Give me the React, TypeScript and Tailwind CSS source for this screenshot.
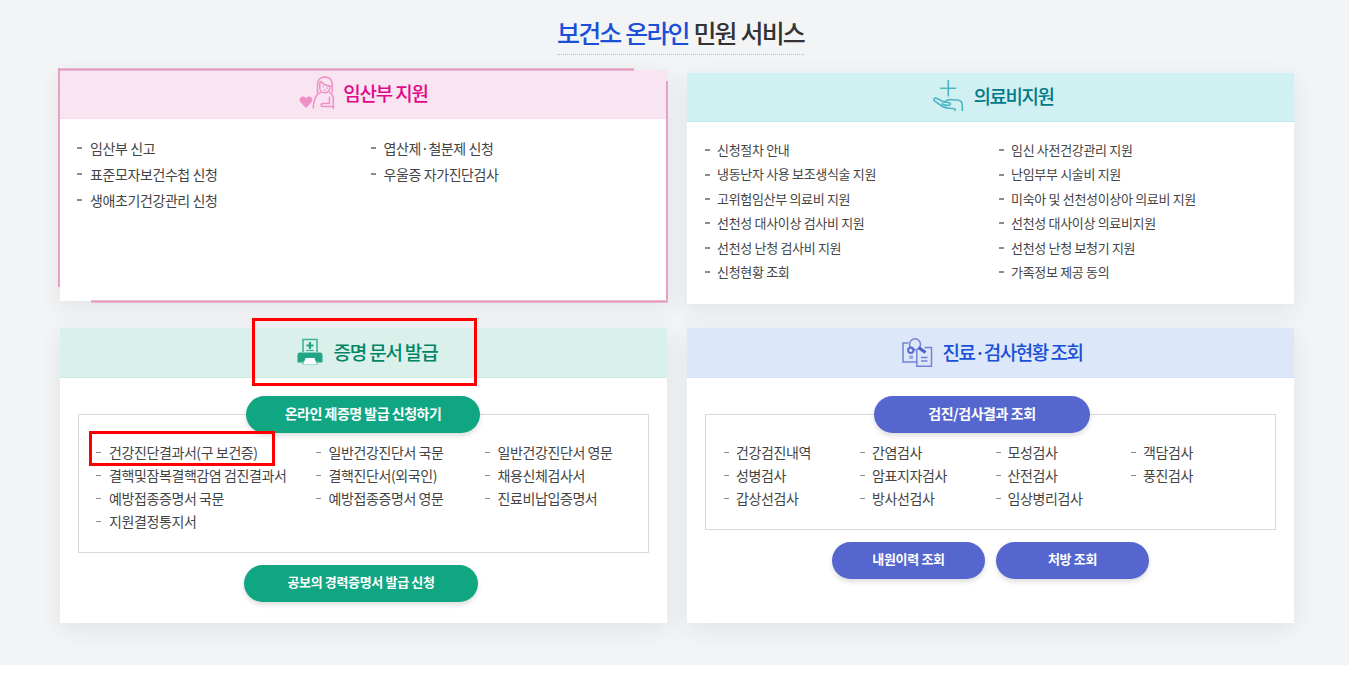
const certColumns = [
  { width: "w-[219.5px]", items: ["건강진단결과서(구 보건증)", "결핵및잠복결핵감염 검진결과서", "예방접종증명서 국문", "지원결정통지서"] },
  { width: "w-[169px]", items: ["일반건강진단서 국문", "결핵진단서(외국인)", "예방접종증명서 영문"] },
  { width: "w-[150px]", items: ["일반건강진단서 영문", "채용신체검사서", "진료비납입증명서"] },
];

const examColumns = [
  { width: "w-[136px]", items: ["건강검진내역", "성병검사", "갑상선검사"] },
  { width: "w-[135.5px]", items: ["간염검사", "암표지자검사", "방사선검사"] },
  { width: "w-[135.5px]", items: ["모성검사", "산전검사", "임상병리검사"] },
  { width: "w-[120px]", items: ["객담검사", "풍진검사"] },
];

const pregnancyColumns = [
  { width: "w-[293.5px]", items: ["임산부 신고", "표준모자보건수첩 신청", "생애초기건강관리 신청"] },
  { width: "w-[250px]", items: ["엽산제·철분제 신청", "우울증 자가진단검사"] },
];

const medicalColumns = [
  {
    width: "w-[294px]",
    items: ["신청절차 안내", "냉동난자 사용 보조생식술 지원", "고위험임산부 의료비 지원", "선천성 대사이상 검사비 지원", "선천성 난청 검사비 지원", "신청현황 조회"],
  },
  {
    width: "w-[250px]",
    items: ["임신 사전건강관리 지원", "난임부부 시술비 지원", "미숙아 및 선천성이상아 의료비 지원", "선천성 대사이상 의료비지원", "선천성 난청 보청기 지원", "가족정보 제공 동의"],
  },
];

type Column = { width: string; items: string[] };

function LinkColumns({ columns, row, dash }: { columns: Column[]; row: string; dash: string }) {
  return (
    <div className="flex text-[#444]">
      {columns.map((col) => (
        <ul key={col.items[0]} className={`shrink-0 ${col.width}`}>
          {col.items.map((item) => (
            <li key={item} className={`flex items-center whitespace-nowrap ${row}`}>
              <span className={`shrink-0 w-[5px] -mt-0.5 bg-[#8c8c8c] ${dash}`} />
              <a className="-mt-[3px]">{item}</a>
            </li>
          ))}
        </ul>
      ))}
    </div>
  );
}

function Pill({ className, children }: { className: string; children: string }) {
  return (
    <button
      className={`h-[37px] shrink-0 rounded-full pb-[3px] text-center font-bold whitespace-nowrap text-white shadow-[0_3px_5px_rgba(0,0,0,0.13)] ${className}`}>
      {children}
    </button>
  );
}

function MotherIcon() {
  return (
    <svg width="36" height="34" viewBox="0 0 36 34" fill="none" stroke="#f08fc8" strokeWidth="1.5">
      <path d="M7 32 1.500 26.200C-1.500 22.500 3.500 18 7 22.200 10.500 18 15.500 22.500 12.500 26.200Z" fill="#f08fc8" stroke="none" />
      <path d="M18.500 17V8c0-4 3-7 7.400-7s7.400 3 7.400 7v8.500M21.500 5c2.500 3.500 6 5 11.500 5.500M20.800 6v5.500c0 3 2 5.300 5 5.300s5.200-2.500 5.200-5.500" />
      <path d="M22.800 10.500q1 1 2 0M27 11.800q1 1 2 0M24 13.800q1.500.8 2.800 0" strokeWidth="1" />
      <path d="M22 16.500c-4 .8-5.500 4-6.300 7.500-.8 2.500-1.500 5-1.500 8.500M30 16.500c3 .8 4.300 3.500 4.300 7v9.500M30.500 20.500v7H24c-2.500 0-2.500 3 0 3h10" />
    </svg>
  );
}

function CareIcon() {
  return (
    <svg width="31" height="32" viewBox="0 0 31 32" fill="none" stroke="#4db6c6" strokeWidth="1.6">
      <path d="M15.300 0v16.500M7.300 8.300h16" />
      <path d="M29.300 31v-5.500c0-3.500-2.300-5.500-5.500-5.500-3 0-6-.8-8.500-.2L11 22 3.500 18.300C1.500 17.500 0 19.500 1.500 21L9.500 26.500c3.500 2.300 8 1.300 12.500 2.500v2" />
      <path d="M8.500 23.500c2.500 1.800 5 2.300 8 1.500 1.500-.5 1.300-2-.3-2.200L11 22" />
    </svg>
  );
}

function PrinterIcon() {
  return (
    <svg width="26" height="27" viewBox="0 0 26 27">
      <path d="M6 14V1.500h14V14" fill="#d9f2ea" stroke="#3db497" strokeWidth="1.600" />
      <path d="M11.900 4h2.200v2.400h2.400v2.200h-2.400V11h-2.200V8.600H9.500V6.400h2.400z" fill="#21a585" />
      <path d="M9 12.500h8" stroke="#3db497" strokeWidth="1.200" />
      <path d="M3 14.500h20c1.600 0 2.500 1 2.500 2.500v7.500H.5V17c0-1.500.9-2.500 2.500-2.500z" fill="#21a585" />
      <path d="M5 23.500h16v3H5z" fill="#79cbb7" />
      <path d="M8.500 20h9l2 6h-13z" fill="#fff" />
    </svg>
  );
}

function ExamIcon() {
  return (
    <svg width="31" height="30" viewBox="0 0 31 30" fill="none" stroke="#7382d6" strokeWidth="1.500">
      <path d="M6.500 5H1v19h13.500M22.500 9.500h7v18.800H14.800V12" />
      <circle cx="13" cy="6.300" r="5.500" />
      <path d="M16.500 9.500 23.500 14.500" stroke="#4f5fca" strokeWidth="3.200" />
      <circle cx="8.800" cy="12.300" r="2.700" stroke="#5b6bd0" strokeWidth="2" />
      <path d="M19 19.500h6.500M19 23h6.500" />
      <path d="M7.300 17.500H11V21H7.300z" fill="#98a4e4" stroke="none" />
    </svg>
  );
}

export default function App() {
  return (
    <div className="h-[675px] overflow-hidden bg-white font-['Noto_Sans_CJK_KR','Noto_Sans',sans-serif]">
      <section className="relative h-[665px] bg-[#f3f4f6]">
        <div className="flex h-[73px] justify-center pt-[15px] pl-3">
          <h2 className="h-10 border-b border-dotted border-[#a9b7ea] text-[25px] leading-[35px] font-medium tracking-[-1.85px] whitespace-nowrap text-[#333] [word-spacing:1px]">
            <span className="text-[#1a50d8]">보건소 온라인</span> 민원 서비스
          </h2>
        </div>

        <div className="grid grid-cols-[607px_607px] grid-rows-[231px_295px] gap-x-5 gap-y-6 pl-[60px]">
          <article className="relative -top-[3px] bg-white shadow-[0_6px_22px_rgba(40,60,60,0.09)]">
            <h3 className="flex h-[49px] items-center justify-center border-b border-[#fbd9ec] bg-[#f9e4f1] pb-0.5 text-[19px] font-medium tracking-[-1.2px] text-[#e3078a]">
              <span className="mr-2"><MotherIcon /></span>
              <span>임산부 지원</span>
            </h3>
            <div className="pt-[17px] pl-[17px] text-sm tracking-[-0.4px]">
              <LinkColumns columns={pregnancyColumns} row="h-[26px] gap-2" dash="h-0.5" />
            </div>
            <span className="absolute -top-0.5 -left-0.5 h-[3px] w-[576px] border-y border-[#e3bfd5] bg-[#ee8fc4]" />
            <span className="absolute -top-0.5 -left-0.5 h-[219px] w-0.5 bg-[#e9a0c8]" />
            <span className="absolute top-[11px] -right-px h-[221px] w-0.5 bg-[#e9a0c8]" />
            <span className="absolute -right-px -bottom-0.5 h-[3px] w-[577px] border-y border-[#e3bfd5] bg-[#ee8fc4]" />
          </article>

          <article className="bg-white shadow-[0_6px_22px_rgba(40,60,60,0.09)]">
            <h3 className="flex h-[49px] items-center justify-center border-b border-[#bce9ec] bg-[#d1f0f1] pb-0.5 pl-[5px] text-[19px] font-medium tracking-[-1.5px] text-[#00798b]">
              <span className="mr-2.5"><CareIcon /></span>
              <span>의료비지원</span>
            </h3>
            <div className="pt-[17px] pl-[18px] text-[13px] tracking-[-0.32px]">
              <LinkColumns columns={medicalColumns} row="h-[24.4px] gap-[7px]" dash="h-0.5" />
            </div>
          </article>

          <article className="bg-white shadow-[0_6px_22px_rgba(40,60,60,0.09)]">
            <h3 className="flex h-[50px] items-center justify-center border-b border-[#ccece3] bg-[#daf1eb] pl-[7px] text-[19px] font-medium tracking-[-1.2px] text-[#008566]">
              <span className="mr-[11px] -mt-0.5"><PrinterIcon /></span>
              <span>증명 문서 발급</span>
            </h3>
            <div className="mx-[18px] mt-9 h-[139px] border border-[#d9d9d9]">
              <div className="-mt-[19px] flex justify-center pr-px">
                <Pill className="w-[234px] bg-[#10a682] text-sm tracking-[-0.5px]">온라인 제증명 발급 신청하기</Pill>
              </div>
              <div className="pt-[9px] pl-[17px] text-sm tracking-[-0.4px]">
                <LinkColumns columns={certColumns} row="h-[23px] gap-2" dash="h-px" />
              </div>
            </div>
            <div className="mt-3 flex justify-center pr-[5px]">
              <Pill className="w-[234px] bg-[#10a682] text-[13px] tracking-[-0.35px]">공보의 경력증명서 발급 신청</Pill>
            </div>
          </article>

          <article className="bg-white shadow-[0_6px_22px_rgba(40,60,60,0.09)]">
            <h3 className="flex h-[50px] items-center justify-center border-b border-[#cfe0f8] bg-[#dce8fa] pl-1 text-[19px] font-medium tracking-[-1.5px] text-[#1a50d8]">
              <span className="mr-[9px]"><ExamIcon /></span>
              <span>진료·검사현황 조회</span>
            </h3>
            <div className="mx-[18px] mt-9 h-[116px] border border-[#d9d9d9]">
              <div className="-mt-[19px] flex justify-center pr-[17px]">
                <Pill className="w-[216px] bg-[#5567cf] text-sm tracking-[-0.4px]">검진/검사결과 조회</Pill>
              </div>
              <div className="pt-[9px] pl-[18px] text-sm tracking-[-0.4px]">
                <LinkColumns columns={examColumns} row="h-[23px] gap-[7px]" dash="h-px" />
              </div>
            </div>
            <div className="mt-3 flex justify-center gap-[11px]">
              <Pill className="w-[153px] bg-[#5567cf] text-[13px] tracking-[-0.35px]">내원이력 조회</Pill>
              <Pill className="w-[153px] bg-[#5567cf] text-[13px] tracking-[-0.35px]">처방 조회</Pill>
            </div>
          </article>
        </div>

        {/* red highlight frames over the certificate card */}
        <span className="absolute top-[318px] left-[252px] h-[68px] w-[225px] border-[3px] border-[#fe0000]" />
        <span className="absolute top-[431px] left-[89px] h-[35px] w-[186px] border-[3px] border-[#fe0000]" />
      </section>
    </div>
  );
}
